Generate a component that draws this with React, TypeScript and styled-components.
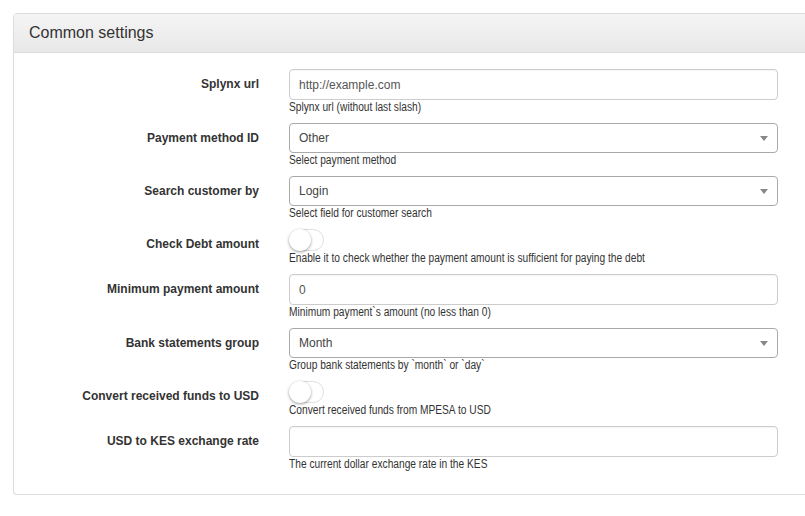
import React, { useState } from "react";
import styled, { createGlobalStyle } from "styled-components";

// ==================== Data ====================
type Field =
  | { kind: "input"; label: string; value: string; help: string }
  | { kind: "select"; label: string; value: string; help: string }
  | { kind: "toggle"; label: string; help: string };

const fields: Field[] = [
  { kind: "input", label: "Splynx url", value: "http://example.com", help: "Splynx url (without last slash)" },
  { kind: "select", label: "Payment method ID", value: "Other", help: "Select payment method" },
  { kind: "select", label: "Search customer by", value: "Login", help: "Select field for customer search" },
  {
    kind: "toggle",
    label: "Check Debt amount",
    help: "Enable it to check whether the payment amount is sufficient for paying the debt",
  },
  { kind: "input", label: "Minimum payment amount", value: "0", help: "Minimum payment`s amount (no less than 0)" },
  { kind: "select", label: "Bank statements group", value: "Month", help: "Group bank statements by `month` or `day`" },
  { kind: "toggle", label: "Convert received funds to USD", help: "Convert received funds from MPESA to USD" },
  { kind: "input", label: "USD to KES exchange rate", value: "", help: "The current dollar exchange rate in the KES" },
];

// ==================== Main Component ====================
export default function App() {
  const [toggles, setToggles] = useState<Record<string, boolean>>({});

  return (
    <>
      <GlobalStyle />
      <Page>
        <Panel>
          <PanelHeading>Common settings</PanelHeading>
          <PanelBody>
            {fields.map((f) => (
              <FormRow key={f.label}>
                <Label>{f.label}</Label>
                <Control>
                  {f.kind === "toggle" ? (
                    <Switch
                      $on={!!toggles[f.label]}
                      onClick={() => setToggles({ ...toggles, [f.label]: !toggles[f.label] })}
                    >
                      <Knob $on={!!toggles[f.label]} />
                    </Switch>
                  ) : f.kind === "select" ? (
                    <SelectBox>
                      <span>{f.value}</span>
                      <Caret />
                    </SelectBox>
                  ) : (
                    <TextInput defaultValue={f.value} />
                  )}
                  <Help>{f.help}</Help>
                </Control>
              </FormRow>
            ))}
          </PanelBody>
        </Panel>
      </Page>
    </>
  );
}

// ==================== Styled Components ====================

const GlobalStyle = createGlobalStyle`
  html, body {
    margin: 0;
    background: #fff;
    overflow: hidden;
  }
  body {
    font-family: "Liberation Sans", Arial, sans-serif;
    color: #333;
  }
`;

const Page = styled.div`
  padding: 13px 0 0 13px;
  width: 860px;
`;

const Panel = styled.div`
  border: 1px solid #dcdcdc;
  border-radius: 4px;
  box-shadow: 0 1px 1px rgba(0, 0, 0, 0.05);
  background: #fff;
`;

const PanelHeading = styled.div`
  height: 39px;
  padding: 0 15px;
  display: flex;
  align-items: center;
  font-size: 16px;
  line-height: 18px;
  padding-bottom: 1px;
  box-sizing: border-box;
  color: #333;
  background: linear-gradient(to bottom, #f5f5f5, #e8e8e8);
  border-bottom: 1px solid #dcdcdc;
  border-radius: 3px 3px 0 0;
`;

const PanelBody = styled.div`
  padding: 16px 0 14px 0;
`;

const FormRow = styled.div`
  display: grid;
  grid-template-columns: 245px 489px;
  column-gap: 30px;
  margin-bottom: 8px;
`;

const Label = styled.label`
  text-align: right;
  font-size: 12px;
  font-weight: bold;
  line-height: 14px;
  padding-top: 8px;
  color: #333;
`;

const Control = styled.div`
  display: flex;
  flex-direction: column;
  align-items: flex-start;
`;

const TextInput = styled.input`
  box-sizing: border-box;
  width: 100%;
  height: 31px;
  padding: 0 9px;
  font-family: "Liberation Sans", Arial, sans-serif;
  font-size: 12px;
  color: #555;
  border: 1px solid #ccc;
  border-radius: 4px;
  box-shadow: inset 0 1px 1px rgba(0, 0, 0, 0.04);
  outline: none;
`;

const SelectBox = styled.div`
  box-sizing: border-box;
  width: 100%;
  height: 30px;
  padding: 0 9px;
  display: flex;
  align-items: center;
  justify-content: space-between;
  font-size: 12px;
  color: #444;
  border: 1px solid #aaa;
  border-radius: 4px;
  background: #fff;
`;

const Caret = styled.span`
  width: 0;
  height: 0;
  border-left: 4px solid transparent;
  border-right: 4px solid transparent;
  border-top: 5px solid #888;
`;

const Switch = styled.div<{ $on: boolean }>`
  box-sizing: border-box;
  position: relative;
  width: 35px;
  height: 22px;
  border-radius: 11px;
  border: 1px solid #dfdfdf;
  background: ${(p) => (p.$on ? "#64bd63" : "#fff")};
  cursor: pointer;
`;

const Knob = styled.span<{ $on: boolean }>`
  position: absolute;
  top: -1px;
  left: ${(p) => (p.$on ? "13px" : "-1px")};
  width: 22px;
  height: 22px;
  border-radius: 50%;
  background: #fff;
  box-shadow: 0 1px 3px rgba(0, 0, 0, 0.4);
`;

/* the reference renders help text in a condensed face; no narrow font is installed */
const Help = styled.div`
  font-size: 12px;
  line-height: 15px;
  color: #333;
  white-space: nowrap;
  transform: scaleX(0.85);
  transform-origin: left center;
`;
